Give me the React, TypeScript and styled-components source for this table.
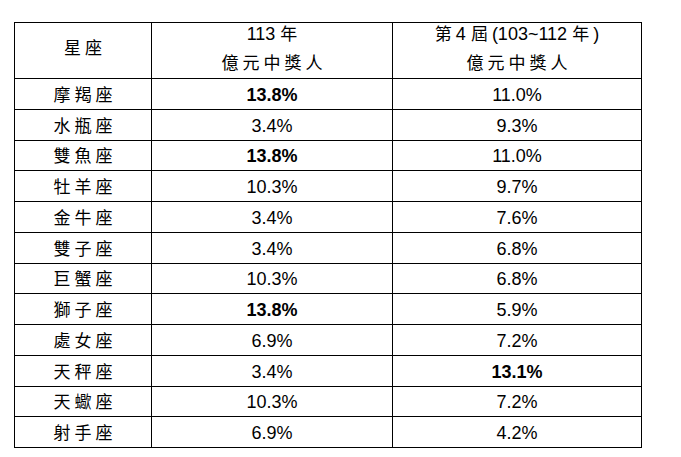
import styled, { createGlobalStyle } from "styled-components";

const GlobalStyle = createGlobalStyle`
  html, body {
    margin: 0;
    padding: 0;
    background: #fff;
  }
  body {
    font-family: "Liberation Sans", "Noto Sans CJK TC", sans-serif;
    color: #000;
  }
`;

const Page = styled.div`
  padding: 22px 0 0 14px;
`;

const Table = styled.table`
  border-collapse: collapse;
  table-layout: fixed;
  width: 627px;
  font-size: 18px;
`;

const HeadRow = styled.tr`
  height: 56px;
`;

const Row = styled.tr`
  height: 30.75px;
`;

const Cell = styled.td<{ $bold?: boolean }>`
  border: 1px solid #000;
  padding: 2px 0 0;
  text-align: center;
  vertical-align: middle;
  font-weight: ${(p) => (p.$bold ? 700 : 400)};
  line-height: 20px;
`;

const HeadCell = styled.th`
  border: 1px solid #000;
  padding: 0;
  text-align: center;
  vertical-align: top;
  font-weight: 400;
`;

const HeadStack = styled.div`
  height: 55px;
  box-sizing: border-box;
  padding-bottom: 4px;
  display: flex;
  flex-direction: column;
  justify-content: center;
  align-items: center;
`;

const HeadLine = styled.div`
  flex: none;
  height: 29px;
  line-height: 29px;
  white-space: nowrap;
`;

// CJK runs: the original uses wide-set Ming glyphs, so they get extra tracking
const Cjk = styled.span<{ $trim?: boolean }>`
  font-family: "Noto Sans CJK TC", sans-serif;
  font-size: 17px;
  line-height: 1;
  letter-spacing: 4px;
  margin-right: ${(p) => (p.$trim ? "-4px" : "0")};
`;

type Entry = {
  sign: string;
  now: string;
  past: string;
  nowBold?: boolean;
  pastBold?: boolean;
};

const data: Entry[] = [
  { sign: "摩羯座", now: "13.8%", past: "11.0%", nowBold: true },
  { sign: "水瓶座", now: "3.4%", past: "9.3%" },
  { sign: "雙魚座", now: "13.8%", past: "11.0%", nowBold: true },
  { sign: "牡羊座", now: "10.3%", past: "9.7%" },
  { sign: "金牛座", now: "3.4%", past: "7.6%" },
  { sign: "雙子座", now: "3.4%", past: "6.8%" },
  { sign: "巨蟹座", now: "10.3%", past: "6.8%" },
  { sign: "獅子座", now: "13.8%", past: "5.9%", nowBold: true },
  { sign: "處女座", now: "6.9%", past: "7.2%" },
  { sign: "天秤座", now: "3.4%", past: "13.1%", pastBold: true },
  { sign: "天蠍座", now: "10.3%", past: "7.2%" },
  { sign: "射手座", now: "6.9%", past: "4.2%" },
];

export default function App() {
  return (
    <Page>
      <GlobalStyle />
      <Table>
        <colgroup>
          <col style={{ width: 137 }} />
          <col style={{ width: 241 }} />
          <col style={{ width: 249 }} />
        </colgroup>
        <thead>
          <HeadRow>
            <HeadCell>
              <HeadStack>
                <HeadLine>
                  <Cjk $trim>星座</Cjk>
                </HeadLine>
              </HeadStack>
            </HeadCell>
            <HeadCell>
              <HeadStack>
                <HeadLine>
                  113 <Cjk $trim>年</Cjk>
                </HeadLine>
                <HeadLine>
                  <Cjk $trim>億元中獎人</Cjk>
                </HeadLine>
              </HeadStack>
            </HeadCell>
            <HeadCell>
              <HeadStack>
                <HeadLine>
                  <Cjk>第</Cjk>4 <Cjk>屆</Cjk>(103~112 <Cjk>年</Cjk>)
                </HeadLine>
                <HeadLine>
                  <Cjk $trim>億元中獎人</Cjk>
                </HeadLine>
              </HeadStack>
            </HeadCell>
          </HeadRow>
        </thead>
        <tbody>
          {data.map((item) => (
            <Row key={item.sign}>
              <Cell>
                <Cjk $trim>{item.sign}</Cjk>
              </Cell>
              <Cell $bold={item.nowBold}>{item.now}</Cell>
              <Cell $bold={item.pastBold}>{item.past}</Cell>
            </Row>
          ))}
        </tbody>
      </Table>
    </Page>
  );
}
